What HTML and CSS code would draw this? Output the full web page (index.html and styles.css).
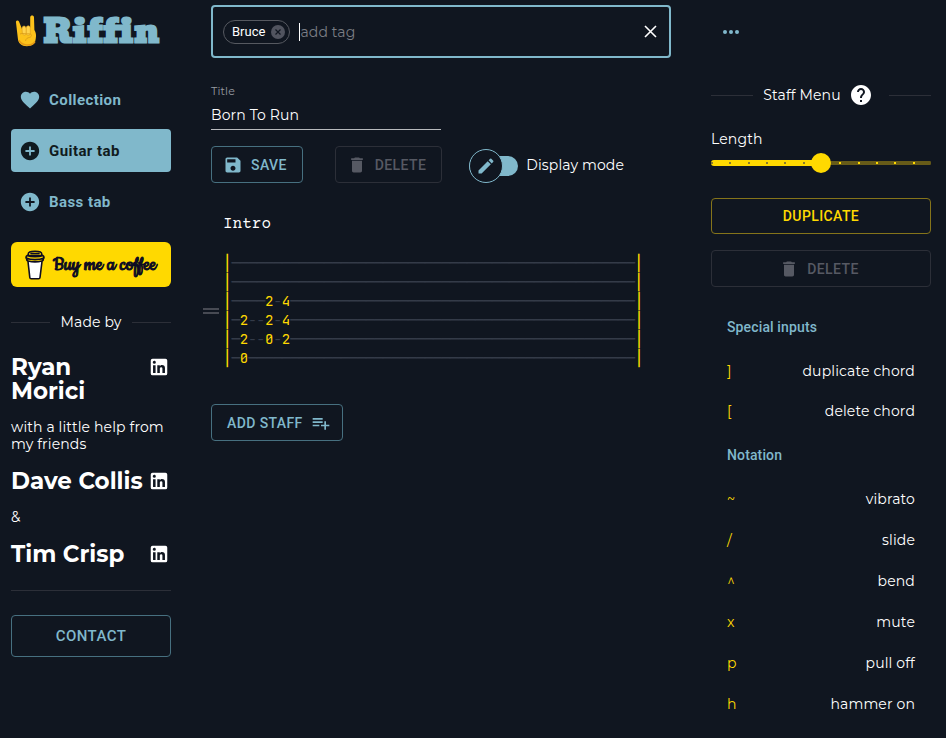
FILE: index.html
```html
<!DOCTYPE html>
<html lang="en">
<head>
<meta charset="utf-8">
<meta name="viewport" content="width=device-width, initial-scale=1">
<title>Riffin</title>
<link rel="stylesheet" href="styles.css">
</head>
<body>
<svg class="defs" aria-hidden="true">
  <symbol id="plus" viewBox="0 0 24 24"><path d="M12 2C6.48 2 2 6.48 2 12s4.48 10 10 10 10-4.48 10-10S17.520 2 12 2zm5 11h-4v4h-2v-4H7v-2h4V7h2v4h4v2z"/></symbol>
  <symbol id="trash" viewBox="0 0 24 24"><path d="M6 19c0 1.100.9 2 2 2h8c1.100 0 2-.9 2-2V7H6v12zM19 4h-3.500l-1-1h-5l-1 1H5v2h14V4z"/></symbol>
  <symbol id="linkedin" viewBox="0 0 24 24"><path d="M19 3a2 2 0 0 1 2 2v14a2 2 0 0 1-2 2H5a2 2 0 0 1-2-2V5a2 2 0 0 1 2-2h14m-.5 15.500v-5.300a3.260 3.260 0 0 0-3.260-3.260c-.85 0-1.840.52-2.320 1.300v-1.110h-2.790v8.370h2.790v-4.930c0-.77.62-1.400 1.390-1.400a1.400 1.400 0 0 1 1.400 1.400v4.930h2.790M6.880 8.560a1.680 1.680 0 0 0 1.680-1.680c0-.93-.75-1.690-1.680-1.690a1.690 1.690 0 0 0-1.690 1.690c0 .93.76 1.680 1.690 1.680m1.390 9.940v-8.370H5.500v8.370h2.770z"/></symbol>
</svg>
<div class="app">
  <aside class="sidebar">
    <a class="logo" href="#">
      <svg class="horns" viewBox="0 0 22 32" aria-hidden="true">
        <path d="M1 7.500C.5 5.400 3.200 4.700 4 6.600L7 14l8.200-1.500V2.300C15.300-.2 19-.2 19 2.400L19.400 15c2.500 4 1.500 8 1 10.500-.8 3.700-4 5.700-8.500 5.700-5.300 0-8.800-3-9.100-8.200z" fill="#fcc21b"/>
        <path d="M7 13.500c0-3 3.500-3.300 4-.5.500-3 4.300-3 4.300.3v5.200c0 2-3.500 2.500-4 .2-.7 2-4 1.500-4-.7z" fill="#ffd34d" stroke="#d99a18" stroke-width=".6"/>
        <path d="M5 19c2-1.500 6 .3 9.500-.2 2.500 0 2.500 3 .3 3.500-2.300.5-4 1.200-4.300 3.700M11.200 13v5.500" fill="none" stroke="#d99a18" stroke-width=".8"/>
        <path d="M4 25c1.500 5 12 7.500 16 1.500" fill="none" stroke="#e59a16" stroke-width="1.500"/>
      </svg>
      <span class="wordmark">Riffin</span>
    </a>
    <nav class="nav">
      <a class="nav-item" href="#"><svg class="icon" viewBox="0 0 24 24"><path d="m12 21.350-1.450-1.320C5.400 15.360 2 12.280 2 8.500 2 5.420 4.420 3 7.500 3c1.740 0 3.410.81 4.500 2.090C13.090 3.810 14.760 3 16.500 3 19.580 3 22 5.420 22 8.500c0 3.780-3.400 6.860-8.550 11.540L12 21.350z"/></svg>Collection</a>
      <a class="nav-item active" href="#" aria-current="page"><svg class="icon"><use href="#plus"/></svg>Guitar tab</a>
      <a class="nav-item" href="#"><svg class="icon"><use href="#plus"/></svg>Bass tab</a>
    </nav>
    <a class="coffee" href="#">
      <svg class="cup" viewBox="0 0 22 30" aria-hidden="true">
        <path d="M4.500 12 6 28.500h10L17.600 12z" fill="#fff"/>
        <path d="M4 11.500 5.800 27.500c.1 1 .6 1.300 1.400 1.300h7.400c.9 0 1.300-.4 1.400-1.300L18 11.500M4.200 4.500C4 2 6 1.300 11 1.300s7 .8 6.800 3.200M3 5.500c4 1.500 12 1.500 16 0M2 8c0-1.500.5-2.500 2-2.500h14c1.500 0 2 1 2 2.500-5 2.200-13 2.200-18 0zM2.500 8.500c0 1.500.5 2.300 1.500 2.500 4 1 10 1 14 0 1-.2 1.500-1 1.500-2.500M7 3.500h8" fill="none" stroke="#0d0c22" stroke-width="1.600" stroke-linecap="round" stroke-linejoin="round"/>
      </svg>
      <span>Buy me a coffee</span>
    </a>
    <p class="divider made-by"><span>Made by</span></p>
    <div class="person"><h2>Ryan Morici</h2><a href="#" aria-label="Ryan Morici on LinkedIn"><svg class="icon"><use href="#linkedin"/></svg></a></div>
    <p class="note">with a little help from my friends</p>
    <div class="person"><h2>Dave Collis</h2><a href="#" aria-label="Dave Collis on LinkedIn"><svg class="icon"><use href="#linkedin"/></svg></a></div>
    <p class="note">&amp;</p>
    <div class="person"><h2>Tim Crisp</h2><a href="#" aria-label="Tim Crisp on LinkedIn"><svg class="icon"><use href="#linkedin"/></svg></a></div>
    <hr>
    <button class="btn contact" type="button">CONTACT</button>
  </aside>

  <main class="editor">
    <div class="tags">
      <span class="chip">Bruce<button type="button" aria-label="Remove Bruce"><svg viewBox="0 0 14 14"><circle cx="7" cy="7" r="7"/><path d="m4.500 4.500 5 5m0-5-5 5"/></svg></button></span>
      <input class="tag-input" type="text" placeholder="add tag" aria-label="add tag">
      <button class="clear" type="button" aria-label="Clear"><svg viewBox="0 0 13 13"><path d="m1 1 11 11M12 1 1 12"/></svg></button>
    </div>
    <div class="field">
      <label for="title">Title</label>
      <input id="title" type="text" value="Born To Run">
    </div>
    <div class="actions">
      <button class="btn" type="button"><svg class="icon" viewBox="0 0 24 24"><path d="M17 3H5c-1.110 0-2 .9-2 2v14c0 1.100.89 2 2 2h14c1.100 0 2-.9 2-2V7l-4-4zm-5 16c-1.660 0-3-1.340-3-3s1.340-3 3-3 3 1.340 3 3-1.340 3-3 3zm3-10H5V5h10v4z"/></svg>SAVE</button>
      <button class="btn" type="button" disabled><svg class="icon"><use href="#trash"/></svg>DELETE</button>
      <label class="switch">
        <input type="checkbox">
        <span class="switch-track"><span class="switch-thumb"><svg class="icon" viewBox="0 0 24 24"><path d="M3 17.250V21h3.750L17.810 9.940l-3.750-3.750L3 17.250zM20.710 7.040c.39-.39.39-1.020 0-1.410l-2.340-2.340a1 1 0 0 0-1.410 0l-1.830 1.830 3.750 3.750 1.830-1.830z"/></svg></span></span>
        Display mode
      </label>
    </div>
    <h3 class="staff-name">Intro</h3>
    <div class="staff">
      <span class="handle"></span>
<pre class="tab"><b>│</b>────────────────────────────────────────────────<b>│</b>
<b>│</b>────────────────────────────────────────────────<b>│</b>
<b>│</b>────<b>2</b>-<b>4</b>─────────────────────────────────────────<b>│</b>
<b>│</b>─<b>2</b>--<b>2</b>-<b>4</b>─────────────────────────────────────────<b>│</b>
<b>│</b>─<b>2</b>--<b>0</b>-<b>2</b>─────────────────────────────────────────<b>│</b>
<b>│</b>─<b>0</b>──────────────────────────────────────────────<b>│</b></pre>
    </div>
    <button class="btn add" type="button">ADD STAFF<svg class="icon" viewBox="0 0 24 24"><path d="M14 10H2v2h12v-2zm0-4H2v2h12V6zm4 8v-4h-2v4h-4v2h4v4h2v-4h4v-2h-4zM2 16h8v-2H2v2z"/></svg></button>
  </main>

  <aside class="panel">
    <button class="more" type="button" aria-label="More"><svg viewBox="0 0 16 4"><circle cx="2" cy="2" r="2"/><circle cx="8" cy="2" r="2"/><circle cx="14" cy="2" r="2"/></svg></button>
    <div class="divider staff-menu"><span>Staff Menu</span><button class="help" type="button" aria-label="Help"><svg viewBox="2 2 20 20"><path d="M12 2C6.480 2 2 6.480 2 12s4.480 10 10 10 10-4.480 10-10S17.520 2 12 2zm1 17h-2v-2h2v2zm2.070-7.750-.9.920C13.450 12.900 13 13.500 13 15h-2v-.5c0-1.100.45-2.100 1.170-2.830l1.240-1.260c.37-.36.590-.86.590-1.410 0-1.100-.9-2-2-2s-2 .9-2 2H8c0-2.210 1.790-4 4-4s4 1.790 4 4c0 .88-.36 1.680-.93 2.250z"/></svg></button></div>
    <label class="length" for="length">Length</label>
    <input class="slider" id="length" type="range" min="0" max="12" value="6">
    <button class="btn duplicate" type="button">DUPLICATE</button>
    <button class="btn" type="button" disabled><svg class="icon"><use href="#trash"/></svg>DELETE</button>
    <section class="keys">
      <h4>Special inputs</h4>
      <dl>
        <div><dt>]</dt><dd>duplicate chord</dd></div>
        <div><dt>[</dt><dd>delete chord</dd></div>
      </dl>
      <h4>Notation</h4>
      <dl>
        <div><dt>~</dt><dd>vibrato</dd></div>
        <div><dt>/</dt><dd>slide</dd></div>
        <div><dt>^</dt><dd>bend</dd></div>
        <div><dt>x</dt><dd>mute</dd></div>
        <div><dt>p</dt><dd>pull off</dd></div>
        <div><dt>h</dt><dd>hammer on</dd></div>
      </dl>
    </section>
  </aside>
</div>
</body>
</html>
```
FILE: styles.css
```css
:root {
  --bg: #101620;
  --blue: #80b8cb;
  --blue-line: #477080;
  --yellow: #ffd900;
  --line: #2c2f38;
  --muted: #565963;
  --ui: Roboto, sans-serif;
}

* { box-sizing: border-box; }

body {
  margin: 0;
  background: var(--bg);
  color: #fff;
  font: 14px/17px Montserrat, Inter, sans-serif;
  letter-spacing: .00938em;
}

h2, h3, h4, p, dl, dd, pre { margin: 0; }
a { color: inherit; text-decoration: none; }
button, input { font: inherit; color: inherit; letter-spacing: inherit; }
button { padding: 0; border: 0; background: none; }
svg { display: block; fill: currentColor; }
.defs { display: none; }
.icon { width: 20px; height: 20px; flex: none; }

.app {
  display: grid;
  grid-template-columns: 160px minmax(0, 1fr) 220px;
  gap: 40px;
  padding: 0 15px 0 11px;
}

.sidebar, .editor, .panel { display: flex; flex-direction: column; }

.logo {
  display: flex;
  align-items: center;
  gap: 6px;
  height: 62px;
  padding-left: 4px;
  color: var(--blue);
}
.horns { width: 22px; height: 32px; flex: none; }
.wordmark { font: bold 34px/40px Bevan, "DejaVu Serif", serif; letter-spacing: 0; }

.nav { display: grid; gap: 8px; margin-top: 16px; }
.nav-item {
  display: flex;
  align-items: center;
  gap: 8px;
  height: 43px;
  padding: 0 8px;
  border-radius: 4px;
  color: var(--blue);
  font: bold 15px/20px var(--ui);
  letter-spacing: .02857em;
}
.nav-item .icon { width: 22px; height: 22px; }
.nav-item.active { background: var(--blue); color: #101b20; }

.coffee {
  display: flex;
  align-items: center;
  gap: 7px;
  height: 45px;
  margin: 19px 0 27px;
  padding-left: 13px;
  border-radius: 6px;
  background: var(--yellow);
  color: #0d0c22;
  font: 22px/24px Cookie, Lato, cursive;
  letter-spacing: 0;
  -webkit-text-stroke: 1px #0d0c22;
}
.cup { width: 22px; height: 30px; flex: none; }

.divider { display: flex; align-items: center; gap: 10px; }
.divider::before, .divider::after {
  content: "";
  flex: 1;
  border-top: 1px solid var(--line);
}
.made-by { margin-bottom: 24px; }

.person { display: flex; justify-content: space-between; }
.person h2 { font-size: 23px; line-height: 24px; letter-spacing: 0; }
.person a { margin-right: 1px; }
.person .icon { width: 22px; height: 24px; }
.note { margin: 16px 0; }

hr { width: 100%; margin: 24px 0; border: 0; border-top: 1px solid var(--line); }

.btn {
  display: flex;
  align-items: center;
  justify-content: center;
  gap: 8px;
  height: 37px;
  padding: 0 15px;
  border: 1px solid var(--blue-line);
  border-radius: 4px;
  color: var(--blue);
  font: 500 14px/20px var(--ui);
  letter-spacing: .02857em;
}
.btn .icon { margin-left: -4px; }
.btn:disabled { border-color: var(--line); color: var(--muted); }
.contact { height: 42px; font-size: 15px; }

.tags {
  display: flex;
  align-items: center;
  height: 53px;
  margin-top: 5px;
  padding: 0 12px 0 10px;
  border: 2px solid var(--blue);
  border-radius: 4px;
}
.chip {
  display: flex;
  align-items: center;
  gap: 6px;
  height: 24px;
  padding: 0 4px 0 8px;
  border: 1px solid #565960;
  border-radius: 12px;
  font: 13px/20px var(--ui);
  letter-spacing: 0;
}
.chip svg { width: 14px; height: 14px; fill: #51545f; stroke: var(--bg); stroke-width: 1.200; }
.chip circle { stroke: none; }
.tag-input {
  flex: 1;
  min-width: 0;
  height: 18px;
  margin-left: 9px;
  padding: 0;
  border: 0;
  border-left: 1px solid #fff;
  outline: 0;
  background: none;
}
.tag-input::placeholder { color: #7b7e85; }
.clear svg { width: 13px; height: 13px; stroke: #fff; stroke-width: 1.600; }

.field {
  display: flex;
  flex-direction: column;
  width: 50%;
  margin: 25px 0 16px;
}
.field label { color: #989ba1; font-size: 11px; line-height: 16px; }
.field input {
  height: 31px;
  padding: 2px 0 0;
  border: 0;
  border-bottom: 1px solid #b8babd;
  outline: 0;
  background: none;
}

.actions { display: flex; align-items: center; gap: 32px; }

.switch {
  display: flex;
  align-items: center;
  gap: 8px;
  height: 39px;
  margin: 0 0 -2px -5px;
  white-space: nowrap;
}
.switch input { position: absolute; opacity: 0; }
.switch-track {
  display: flex;
  align-items: center;
  width: 49px;
  height: 20px;
  border-radius: 10px;
  background: var(--blue);
}
.switch-thumb {
  display: grid;
  place-items: center;
  width: 34px;
  height: 34px;
  border: 1px solid var(--blue);
  border-radius: 50%;
  background: var(--bg);
  color: var(--blue);
}

.staff-name {
  margin: 31px 0 20px 12px;
  font: 16px/20px "Courier Prime", "Liberation Mono", monospace;
  letter-spacing: 0;
}
.staff { display: flex; align-items: center; gap: 4px; margin-left: -8px; }
.handle {
  width: 16px;
  height: 6px;
  border: solid #474a53;
  border-width: 2px 0;
}
.tab {
  color: #343b48;
  font: 14px/19px "JetBrains Mono", "Liberation Mono", monospace;
  font-feature-settings: "zero", "calt" 0;
  letter-spacing: 0;
}
.tab b { color: var(--yellow); font-weight: normal; }
.add { align-self: flex-start; margin-top: 36px; }
.add .icon { margin: 0 -4px 0 0; }

.more { align-self: flex-start; padding: 30px 12px; color: var(--blue); }
.more svg { width: 16px; height: 4px; }
.staff-menu { height: 20px; margin: 21px 0 26px; }
.staff-menu::after { margin-left: 8px; }
.help svg { width: 20px; height: 20px; }

.slider {
  appearance: none;
  width: 100%;
  height: 20px;
  margin: 5px 0 25px;
  background: none;
}
.slider::-webkit-slider-runnable-track {
  height: 6px;
  border-radius: 3px;
  background:
    repeating-linear-gradient(90deg, #8a7b2c 0 2px, transparent 2px calc(100% / 6)) left / 50% 2px no-repeat,
    linear-gradient(var(--yellow) 0 0) left / 50% 6px no-repeat,
    repeating-linear-gradient(90deg, var(--yellow) 0 2px, transparent 2px calc(100% / 6)) right / 50% 2px no-repeat,
    linear-gradient(#675b18 0 0) right / 50% 4px no-repeat;
}
.slider::-webkit-slider-thumb {
  appearance: none;
  width: 20px;
  height: 20px;
  margin-top: -7px;
  border-radius: 50%;
  background: var(--yellow);
}

.duplicate { height: 36px; margin-bottom: 16px; border-color: #85741a; color: var(--yellow); }

.keys { padding: 16px; }
.keys h4 { color: var(--blue); font: 500 14px/48px var(--ui); }
.keys dl > div {
  display: flex;
  align-items: center;
  justify-content: space-between;
  height: 41px;
}
.keys dl:first-of-type > div { height: 40px; }
.keys dt { color: var(--yellow); }
```
